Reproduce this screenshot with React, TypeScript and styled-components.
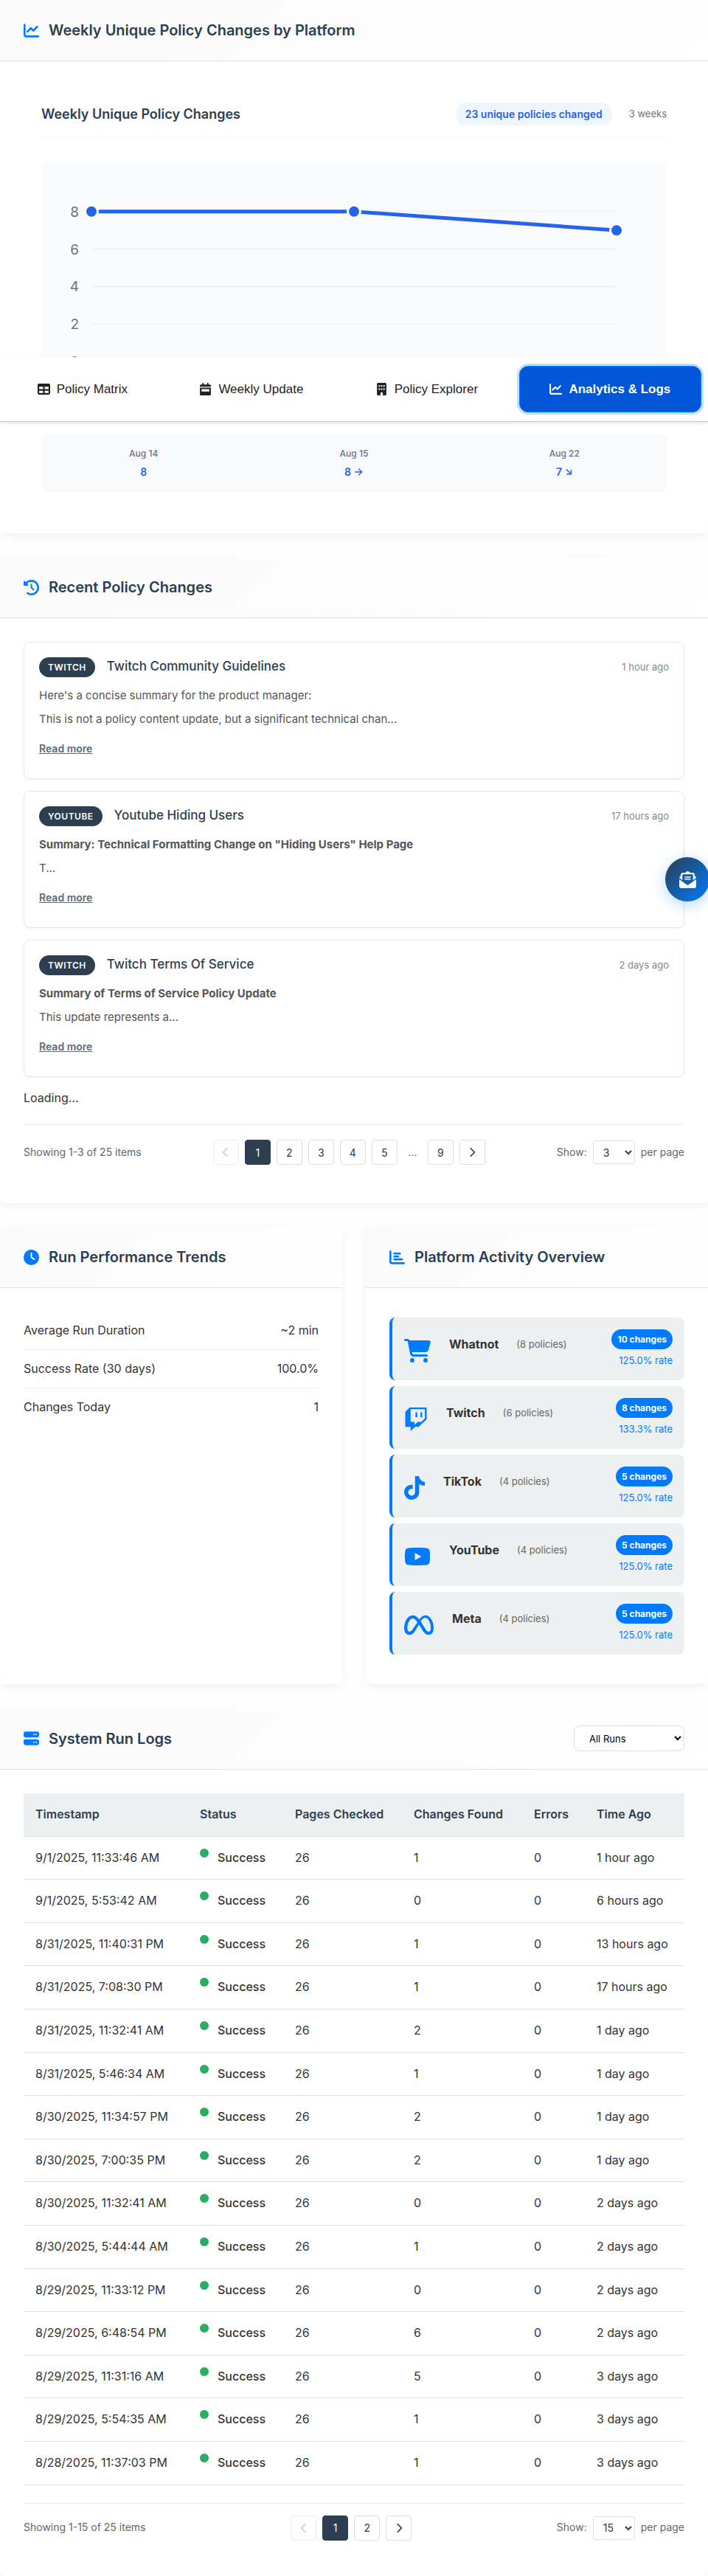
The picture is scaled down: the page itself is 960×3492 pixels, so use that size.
import React from "react";
import styled, { createGlobalStyle, css } from "styled-components";
import {
  FaBuilding,
  FaCalendarWeek,
  FaCartShopping,
  FaChartBar,
  FaChartLine,
  FaChevronLeft,
  FaChevronRight,
  FaClock,
  FaClockRotateLeft,
  FaEnvelopeOpenText,
  FaMeta,
  FaServer,
  FaTable,
  FaTiktok,
  FaTwitch,
  FaYoutube,
} from "react-icons/fa6";

const GlobalStyle = createGlobalStyle`
  *, *::before, *::after { box-sizing: border-box; }
  body {
    margin: 0;
    background: #fefefe;
    color: #333;
    font-family: Inter, "Liberation Sans", sans-serif;
    font-size: 16px;
    line-height: 1.6;
  }
  h2, h3, h4, p { margin: 0; }
`;

const Page = styled.main`
  position: relative;
  display: flex;
  flex-direction: column;
  gap: 32px;
  overflow-x: clip;
`;

/* ---------- panels ---------- */

const Panel = styled.section`
  background: #fff;
  border-radius: 8px;
  box-shadow: 0 4px 12px rgba(0, 0, 0, 0.05);
`;

const PanelHeader = styled.header`
  display: flex;
  align-items: center;
  justify-content: space-between;
  padding: 24px 32px;
  border-bottom: 1px solid #dfe1e3;
  border-radius: 8px 8px 0 0;
  background: linear-gradient(135deg, #fafafa 0%, #ffffff 100%);
`;

const PanelTitle = styled.h2`
  display: flex;
  align-items: center;
  gap: 13px;
  color: #2c3e50;
  font-size: 20px;
  font-weight: 600;
  line-height: 34px;

  svg {
    color: #007bff;
    font-size: 21px;
  }
`;

const PanelBody = styled.div`
  padding: 32px;
`;

const TwoColumns = styled.div`
  display: grid;
  grid-template-columns: 1fr 1fr;
  gap: 32px;
`;

/* ---------- weekly chart ---------- */

const ChartBlock = styled.div`
  padding: 24px;
`;

const ChartHeader = styled.div`
  display: flex;
  align-items: center;
  justify-content: space-between;
  padding-bottom: 16px;
  margin-bottom: 32px;
  border-bottom: 1px solid #f3f4f6;
`;

const ChartTitle = styled.h3`
  color: #2c3e50;
  font-size: 18px;
  font-weight: 600;
  line-height: 31px;
`;

const ChartMeta = styled.div`
  display: flex;
  align-items: center;
  gap: 24px;
  color: #6b7280;
  font-size: 13px;
`;

const TotalBadge = styled.span`
  padding: 0 12px;
  border-radius: 12px;
  background: #eff6ff;
  color: #2563eb;
  font-size: 14px;
  font-weight: 600;
  line-height: 31px;
`;

const ChartSvg = styled.svg`
  display: block;
  width: 100%;
  border-radius: 8px;
  background: #fafbfd;

  text {
    fill: #6b7280;
    font-size: 19px;
    text-anchor: end;
  }
`;

const WeekSummary = styled.div`
  display: grid;
  grid-template-columns: repeat(3, 1fr);
  gap: 40px;
  margin-top: 24px;
  padding: 16px;
  border-radius: 8px;
  background: #f8f9fb;
  text-align: center;
`;

const WeekItem = styled.div`
  display: flex;
  flex-direction: column;
  gap: 4px;
`;

const WeekDate = styled.span`
  color: #6b7280;
  font-size: 12px;
  font-weight: 500;
  line-height: 20px;
`;

const WeekValue = styled.span`
  color: #2563eb;
  font-size: 14px;
  font-weight: 600;
  line-height: 22px;
`;

/* ---------- floating navigation ---------- */

const TabBar = styled.nav`
  position: absolute;
  top: 484px;
  left: 0;
  right: 0;
  z-index: 10;
  display: flex;
  gap: 14px;
  padding: 12px 9px;
  border-bottom: 1px solid #ccc;
  background: #fff;
  box-shadow: 0 2px 4px rgba(0, 0, 0, 0.1);
`;

const Tab = styled.button<{ $active?: boolean }>`
  display: flex;
  flex: 1 1 auto;
  align-items: center;
  justify-content: center;
  gap: 9px;
  height: 63px;
  padding: 0 32px;
  border: 1px solid transparent;
  border-radius: 12px;
  background: transparent;
  color: #222;
  font-family: "Liberation Sans", Arial, sans-serif;
  font-size: 17px;

  ${({ $active }) =>
    $active &&
    css`
      border-color: #007bff;
      background: #0056d6;
      color: #fff;
      font-weight: 700;
      box-shadow: 0 0 0 3px #bfdff5;
    `}
`;

const DigestButton = styled.button`
  position: absolute;
  top: 1162px;
  right: -2px;
  z-index: 10;
  display: flex;
  align-items: center;
  justify-content: center;
  width: 60px;
  height: 60px;
  padding: 0;
  border: 0;
  border-radius: 50%;
  background: linear-gradient(135deg, #2c3e50 0%, #007bff 100%);
  color: #fff;
  font-size: 23px;
  box-shadow: 0 4px 20px rgba(0, 123, 255, 0.3);
`;

/* ---------- recent changes ---------- */

const ChangeList = styled.div`
  display: flex;
  flex-direction: column;
  gap: 16px;
`;

const ChangeCard = styled.article`
  padding: 20px;
  border: 1px solid #e5e7e9;
  border-radius: 8px;
  background: #fff;
  box-shadow: 0 1px 3px rgba(0, 0, 0, 0.05);
`;

const ChangeHead = styled.div`
  display: flex;
  align-items: center;
  height: 27px;
  margin-bottom: 13px;
`;

const PlatformBadge = styled.span`
  padding: 0 12px;
  border-radius: 14px;
  background: #2c3e50;
  color: #fff;
  font-size: 12px;
  font-weight: 600;
  letter-spacing: 0.5px;
  line-height: 27px;
  text-transform: uppercase;
`;

const ChangeTitle = styled.h3`
  flex: 1;
  margin-left: 16px;
  padding-bottom: 3px;
  color: #2c3e50;
  font-size: 17px;
  font-weight: 500;
  line-height: 24px;
`;

const ChangeTime = styled.time`
  color: #7f8c8d;
  font-size: 13px;
`;

const ChangeText = styled.p<{ $strong?: boolean }>`
  margin-bottom: 8px;
  color: #555;
  font-size: 15px;
  font-weight: ${({ $strong }) => ($strong ? 700 : 400)};
  line-height: 24px;
`;

const ReadMore = styled.button`
  display: block;
  margin: 16px 0 8px;
  padding: 0;
  border: 0;
  background: none;
  color: #5a6b7b;
  font: 600 14px/24px Inter, "Liberation Sans", sans-serif;
  text-decoration: underline;
`;

const LoadingNote = styled.p`
  margin-top: 16px;
  line-height: 24px;
`;

/* ---------- pagination ---------- */

const PagerBar = styled.div<{ $compact?: boolean }>`
  display: flex;
  align-items: center;
  justify-content: space-between;
  margin-top: 24px;
  padding: ${({ $compact }) => ($compact ? 16 : 20)}px 0;
  border-top: 1px solid #e9ecef;
  color: #666;
  font-size: 14px;
`;

const PagerButtons = styled.div`
  display: flex;
  align-items: center;
  gap: 8px;
`;

const PagerButton = styled.button<{ $active?: boolean }>`
  display: flex;
  align-items: center;
  justify-content: center;
  width: 35px;
  height: 34px;
  padding: 0;
  border: 1px solid ${({ $active }) => ($active ? "#2c3e50" : "#ddd")};
  border-radius: 4px;
  background: ${({ $active }) => ($active ? "#2c3e50" : "#fff")};
  color: ${({ $active }) => ($active ? "#fff" : "#2c3e50")};
  font-family: inherit;
  font-size: 14px;

  &:disabled {
    opacity: 0.5;
    color: #999;
  }
`;

const PagerDots = styled.span`
  width: 25px;
  text-align: center;
`;

const PerPage = styled.label`
  display: flex;
  align-items: center;
  gap: 8px;

  select {
    width: 57px;
    height: 32px;
    padding: 0 0 0 9px;
    border: 1px solid #ddd;
    border-radius: 4px;
    background: #fff;
    color: #2c3e50;
    font: 14px Inter, "Liberation Sans", sans-serif;
  }
`;

/* ---------- run performance ---------- */

const StatList = styled.dl`
  margin: 0;
`;

const StatRow = styled.div`
  display: flex;
  justify-content: space-between;
  padding: 13px 0;
  line-height: 25px;

  & + & {
    border-top: 1px solid #eceff0;
  }

  dd {
    margin: 0;
  }
`;

/* ---------- platform activity ---------- */

const PlatformList = styled.ul`
  display: flex;
  flex-direction: column;
  gap: 8px;
  margin: 0;
  padding: 8px 0;
  list-style: none;
`;

const PlatformRow = styled.li`
  display: flex;
  align-items: center;
  padding: 16px;
  border-left: 4px solid #007bff;
  border-radius: 8px;
  background: #ecf0f1;
`;

const PlatformIcon = styled.span<{ $width: number }>`
  display: flex;
  padding-top: 4px;
  margin-right: 25px;
  color: #007bff;

  svg {
    width: ${({ $width }) => $width}px;
    height: 32px;
  }
`;

const PlatformLabel = styled.div`
  display: flex;
  flex: 1;
  align-items: center;
  gap: 24px;
  padding-bottom: 12px;
`;

const PlatformName = styled.strong`
  font-size: 16px;
  font-weight: 700;
`;

const PolicyCount = styled.span`
  color: #666;
  font-size: 13px;
`;

const PlatformStats = styled.div`
  display: flex;
  flex-direction: column;
  align-items: flex-end;
  gap: 4px;
`;

const ChangeCount = styled.span`
  padding: 0 8px;
  border-radius: 14px;
  background: #007bff;
  color: #fff;
  font-size: 12px;
  font-weight: 700;
  line-height: 27px;
`;

const ChangeRate = styled.span`
  color: #007bff;
  font-size: 13px;
  line-height: 22px;
`;

/* ---------- run logs ---------- */

const RunFilter = styled.select`
  width: 150px;
  height: 35px;
  padding: 0 0 0 16px;
  border: 1px solid #ddd;
  border-radius: 8px;
  background: #fff;
  color: #000;
  font: 13px Inter, "Liberation Sans", sans-serif;
`;

const LogTable = styled.table`
  width: 100%;
  border-collapse: collapse;
  text-align: left;

  th,
  td {
    padding: 16px;
    border-bottom: 1px solid #dcdfe1;
    line-height: 1.6;
    white-space: nowrap;
  }

  th {
    background: #ecf0f1;
    color: #2c3e50;
    font-weight: 600;
  }
`;

const Status = styled.span`
  display: flex;
  gap: 12px;
  font-weight: 500;

  &::before {
    content: "";
    width: 12px;
    height: 12px;
    border-radius: 50%;
    background: #27ae60;
  }
`;

/* ---------- data ---------- */

const tabs = [
  { label: "Policy Matrix", icon: <FaTable /> },
  { label: "Weekly Update", icon: <FaCalendarWeek /> },
  { label: "Policy Explorer", icon: <FaBuilding /> },
  { label: "Analytics & Logs", icon: <FaChartLine />, active: true },
];

const weeks = [
  { date: "Aug 14", value: "8", count: 8 },
  { date: "Aug 15", value: "8 →", count: 8 },
  { date: "Aug 22", value: "7 ↘", count: 7 },
];

const changes = [
  {
    platform: "Twitch",
    title: "Twitch Community Guidelines",
    time: "1 hour ago",
    lead: "Here's a concise summary for the product manager:",
    text: "This is not a policy content update, but a significant technical chan...",
  },
  {
    platform: "YouTube",
    title: "Youtube Hiding Users",
    time: "17 hours ago",
    lead: 'Summary: Technical Formatting Change on "Hiding Users" Help Page',
    strong: true,
    text: "T...",
  },
  {
    platform: "Twitch",
    title: "Twitch Terms Of Service",
    time: "2 days ago",
    lead: "Summary of Terms of Service Policy Update",
    strong: true,
    text: "This update represents a...",
  },
];

const platforms = [
  { name: "Whatnot", icon: <FaCartShopping />, iconWidth: 36, policies: 8, changes: 10, rate: "125.0%" },
  { name: "Twitch", icon: <FaTwitch />, iconWidth: 32, policies: 6, changes: 8, rate: "133.3%" },
  { name: "TikTok", icon: <FaTiktok />, iconWidth: 28, policies: 4, changes: 5, rate: "125.0%" },
  { name: "YouTube", icon: <FaYoutube />, iconWidth: 36, policies: 4, changes: 5, rate: "125.0%" },
  { name: "Meta", icon: <FaMeta />, iconWidth: 40, policies: 4, changes: 5, rate: "125.0%" },
];

const columns = [
  { label: "Timestamp", width: 223 },
  { label: "Status", width: 129 },
  { label: "Pages Checked", width: 161 },
  { label: "Changes Found", width: 163 },
  { label: "Errors", width: 85 },
  { label: "Time Ago", width: 135 },
];

const runs: [string, number, string][] = [
  ["9/1/2025, 11:33:46 AM", 1, "1 hour ago"],
  ["9/1/2025, 5:53:42 AM", 0, "6 hours ago"],
  ["8/31/2025, 11:40:31 PM", 1, "13 hours ago"],
  ["8/31/2025, 7:08:30 PM", 1, "17 hours ago"],
  ["8/31/2025, 11:32:41 AM", 2, "1 day ago"],
  ["8/31/2025, 5:46:34 AM", 1, "1 day ago"],
  ["8/30/2025, 11:34:57 PM", 2, "1 day ago"],
  ["8/30/2025, 7:00:35 PM", 2, "1 day ago"],
  ["8/30/2025, 11:32:41 AM", 0, "2 days ago"],
  ["8/30/2025, 5:44:44 AM", 1, "2 days ago"],
  ["8/29/2025, 11:33:12 PM", 0, "2 days ago"],
  ["8/29/2025, 6:48:54 PM", 6, "2 days ago"],
  ["8/29/2025, 11:31:16 AM", 5, "3 days ago"],
  ["8/29/2025, 5:54:35 AM", 1, "3 days ago"],
  ["8/28/2025, 11:37:03 PM", 1, "3 days ago"],
];

/* ---------- components ---------- */

function WeeklyChart() {
  const xs = [68, 424, 780];
  const y = (count: number) => 271 - count * 25.4;
  const points = weeks.map((week, i) => ({ x: xs[i], y: y(week.count) }));
  return (
    <ChartSvg viewBox="0 0 848 346" role="img" aria-label="Weekly unique policy changes">
      {[8, 6, 4, 2, 0].map((tick) => (
        <g key={tick}>
          <line x1="68" x2="780" y1={y(tick)} y2={y(tick)} stroke="#f1f2f4" strokeWidth="2" />
          <text x="51" y={y(tick) + 7}>
            {tick}
          </text>
        </g>
      ))}
      <polyline
        points={points.map((p) => `${p.x},${p.y}`).join(" ")}
        fill="none"
        stroke="#2563eb"
        strokeWidth="5"
      />
      {points.map((p) => (
        <circle key={p.x} cx={p.x} cy={p.y} r="8.5" fill="#2563eb" stroke="#fff" strokeWidth="3" />
      ))}
    </ChartSvg>
  );
}

type PagerProps = {
  summary: string;
  pages: (number | "...")[];
  size: number;
  compact?: boolean;
};

function Pager({ summary, pages, size, compact }: PagerProps) {
  return (
    <PagerBar $compact={compact}>
      <span>{summary}</span>
      <PagerButtons>
        <PagerButton disabled aria-label="Previous page">
          <FaChevronLeft />
        </PagerButton>
        {pages.map((page) =>
          page === "..." ? (
            <PagerDots key="dots">...</PagerDots>
          ) : (
            <PagerButton key={page} $active={page === 1}>
              {page}
            </PagerButton>
          ),
        )}
        <PagerButton aria-label="Next page">
          <FaChevronRight />
        </PagerButton>
      </PagerButtons>
      <PerPage>
        Show:
        <select defaultValue={size}>
          <option>{size}</option>
        </select>
        per page
      </PerPage>
    </PagerBar>
  );
}

export default function App() {
  return (
    <>
      <GlobalStyle />
      <Page>
        <TabBar>
          {tabs.map((tab) => (
            <Tab key={tab.label} $active={tab.active}>
              {tab.icon}
              {tab.label}
            </Tab>
          ))}
        </TabBar>
        <DigestButton aria-label="Email digest">
          <FaEnvelopeOpenText />
        </DigestButton>

        <Panel>
          <PanelHeader>
            <PanelTitle>
              <FaChartLine />
              Weekly Unique Policy Changes by Platform
            </PanelTitle>
          </PanelHeader>
          <PanelBody>
            <ChartBlock>
              <ChartHeader>
                <ChartTitle>Weekly Unique Policy Changes</ChartTitle>
                <ChartMeta>
                  <TotalBadge>23 unique policies changed</TotalBadge>
                  <span>3 weeks</span>
                </ChartMeta>
              </ChartHeader>
              <WeeklyChart />
              <WeekSummary>
                {weeks.map((week) => (
                  <WeekItem key={week.date}>
                    <WeekDate>{week.date}</WeekDate>
                    <WeekValue>{week.value}</WeekValue>
                  </WeekItem>
                ))}
              </WeekSummary>
            </ChartBlock>
          </PanelBody>
        </Panel>

        <Panel>
          <PanelHeader>
            <PanelTitle>
              <FaClockRotateLeft />
              Recent Policy Changes
            </PanelTitle>
          </PanelHeader>
          <PanelBody>
            <ChangeList>
              {changes.map((change) => (
                <ChangeCard key={change.title}>
                  <ChangeHead>
                    <PlatformBadge>{change.platform}</PlatformBadge>
                    <ChangeTitle>{change.title}</ChangeTitle>
                    <ChangeTime>{change.time}</ChangeTime>
                  </ChangeHead>
                  <ChangeText $strong={change.strong}>{change.lead}</ChangeText>
                  <ChangeText>{change.text}</ChangeText>
                  <ReadMore>Read more</ReadMore>
                </ChangeCard>
              ))}
            </ChangeList>
            <LoadingNote>Loading...</LoadingNote>
            <Pager
              summary="Showing 1-3 of 25 items"
              pages={[1, 2, 3, 4, 5, "...", 9]}
              size={3}
            />
          </PanelBody>
        </Panel>

        <TwoColumns>
          <Panel>
            <PanelHeader>
              <PanelTitle>
                <FaClock />
                Run Performance Trends
              </PanelTitle>
            </PanelHeader>
            <PanelBody>
              <StatList>
                <StatRow>
                  <dt>Average Run Duration</dt>
                  <dd>~2 min</dd>
                </StatRow>
                <StatRow>
                  <dt>Success Rate (30 days)</dt>
                  <dd>100.0%</dd>
                </StatRow>
                <StatRow>
                  <dt>Changes Today</dt>
                  <dd>1</dd>
                </StatRow>
              </StatList>
            </PanelBody>
          </Panel>
          <Panel>
            <PanelHeader>
              <PanelTitle>
                <FaChartBar />
                Platform Activity Overview
              </PanelTitle>
            </PanelHeader>
            <PanelBody>
              <PlatformList>
                {platforms.map((platform) => (
                  <PlatformRow key={platform.name}>
                    <PlatformIcon $width={platform.iconWidth}>{platform.icon}</PlatformIcon>
                    <PlatformLabel>
                      <PlatformName>{platform.name}</PlatformName>
                      <PolicyCount>({platform.policies} policies)</PolicyCount>
                    </PlatformLabel>
                    <PlatformStats>
                      <ChangeCount>{platform.changes} changes</ChangeCount>
                      <ChangeRate>{platform.rate} rate</ChangeRate>
                    </PlatformStats>
                  </PlatformRow>
                ))}
              </PlatformList>
            </PanelBody>
          </Panel>
        </TwoColumns>

        <Panel>
          <PanelHeader>
            <PanelTitle>
              <FaServer />
              System Run Logs
            </PanelTitle>
            <RunFilter aria-label="Filter runs" defaultValue="All Runs">
              <option>All Runs</option>
            </RunFilter>
          </PanelHeader>
          <PanelBody>
            <LogTable>
              <colgroup>
                {columns.map((column) => (
                  <col key={column.label} width={column.width} />
                ))}
              </colgroup>
              <thead>
                <tr>
                  {columns.map((column) => (
                    <th key={column.label} scope="col">
                      {column.label}
                    </th>
                  ))}
                </tr>
              </thead>
              <tbody>
                {runs.map(([time, found, ago]) => (
                  <tr key={time}>
                    <td>{time}</td>
                    <td>
                      <Status>Success</Status>
                    </td>
                    <td>26</td>
                    <td>{found}</td>
                    <td>0</td>
                    <td>{ago}</td>
                  </tr>
                ))}
              </tbody>
            </LogTable>
            <Pager compact summary="Showing 1-15 of 25 items" pages={[1, 2]} size={15} />
          </PanelBody>
        </Panel>
      </Page>
    </>
  );
}
